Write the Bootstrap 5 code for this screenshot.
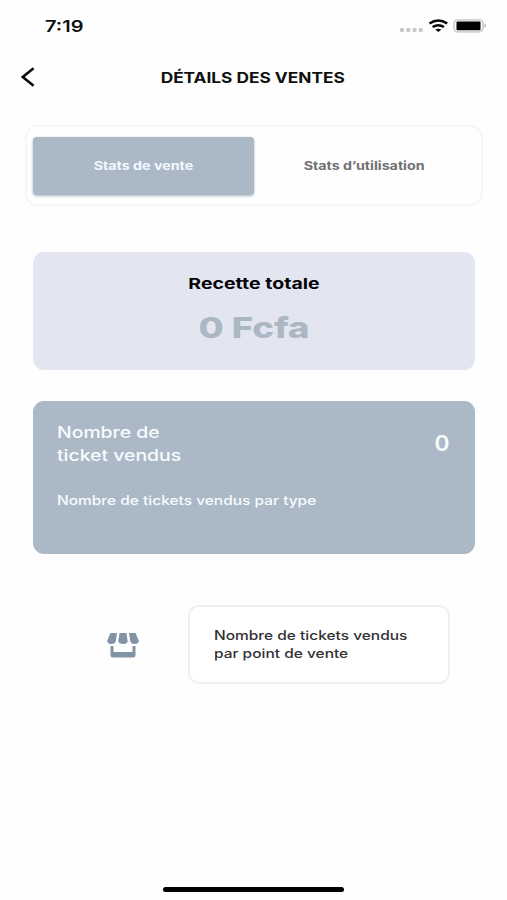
<!DOCTYPE html>
<html lang="fr">
<head>
<meta charset="utf-8">
<meta name="viewport" content="width=device-width, initial-scale=1">
<title>Détails des ventes</title>
<link href="https://cdn.jsdelivr.net/npm/bootstrap@5.3.0/dist/css/bootstrap.min.css" rel="stylesheet">
<style>
body{font-family:Inter,"Open Sans",sans-serif;background:#fefefe;color:#101010}
.screen{height:900px}
.status{height:52px;padding:0 20px 0 44.5px}
.topbar{height:50px;padding:0 21px}
.wide{display:inline-block;white-space:nowrap;transform:scaleX(var(--s));transform-origin:center}
.from-left{transform-origin:left}
.time{font-size:16px;font-weight:600;--s:1.25}
.title{font-size:14.4px;font-weight:700;--s:1.2}
.segments{margin:23px 24.500px 0 25px;height:81px;border:2px solid #f6f6f7;border-radius:12px;padding:10px 5.5px 9px 5.5px}
.segment{font-size:11.6px;font-weight:700;--s:1.23;border-radius:4px;border:0;width:50%;padding:1px 0 0}
.segment.active{background:#abb8c6!important;color:#f3faff!important;box-shadow:0 1px 3px #8997a6b0}
.segment.idle{color:#707072}
.revenue{margin:46px 32px 0 33px;height:118px;border-radius:11px;background:#e3e5f1;padding-top:20px}
.revenue-label{font-size:15px;line-height:24px;font-weight:700;color:#050507;--s:1.3}
.revenue-total{font-size:29px;line-height:40px;margin-top:12px;font-weight:800;color:#abb8c4;--s:1.26}
.tickets{margin:31px 32px 0 33px;height:153px;border-radius:11px;background:#abb8c6;color:#f7fcff;padding:20px 26px 0 24px}
.tickets-label{font-size:15.4px;line-height:23px;font-weight:500;--s:1.26}
.tickets-count{font-size:21px;line-height:30px;margin-top:8px;font-weight:600;--s:1.08}
.tickets-type{font-size:12.7px;line-height:20px;margin-top:24px;font-weight:500;--s:1.22}
.outlets{margin:51px 57px 0 105px}
.outlet-box{width:262px;height:79px;border:2px solid #eff0f3;border-radius:11px;padding:20px 0 0 24px;background:#fff}
.outlet-text{font-size:12.7px;line-height:18px;font-weight:500;color:#303032;--s:1.22}
.home{width:181px;height:5px;border-radius:3px;background:#000;margin:auto 0 8px 163px}
</style>
</head>
<body>
<main class="screen d-flex flex-column overflow-hidden">
  <div class="status d-flex align-items-center justify-content-between">
    <span class="wide from-left time">7:19</span>
    <svg width="90" height="20" viewBox="397 16 90 20" aria-hidden="true">
      <g fill="#c9c9c9"><rect x="400" y="28" width="4" height="4" rx="1"/><rect x="406.300" y="28" width="4" height="4" rx="1"/><rect x="412.500" y="28" width="4" height="4" rx="1"/><rect x="418.700" y="28" width="4" height="4" rx="1"/></g>
      <g fill="none" stroke="#0a0a0a" stroke-width="2.500"><path d="M429.400 23.500Q438.300 17.600 447.200 23.500"/><path d="M432.600 27Q438.300 23.300 444 27"/></g>
      <path d="M435.200 29.600Q438.300 27.700 441.400 29.600L438.300 32z" fill="#0a0a0a"/>
      <rect x="454" y="19.800" width="29" height="12" rx="4" fill="#fafafa" stroke="#d2d2d2" stroke-width="1.800"/>
      <rect x="456.500" y="21.500" width="24" height="8.700" rx="1" fill="#000"/>
      <path d="M484.500 23.500q2.800 2.200 0 4.400z" fill="#aaa"/>
    </svg>
  </div>
  <header class="topbar d-flex align-items-center">
    <svg width="14" height="20" viewBox="0 0 14 20" aria-label="Retour"><path d="M12.600 1.200 1.800 10 12.600 18.800" fill="none" stroke="#0a0a0a" stroke-width="2.500"/></svg>
    <div class="flex-fill text-center pe-3"><h1 class="wide title m-0">DÉTAILS DES VENTES</h1></div>
  </header>
  <div class="segments d-flex">
    <button class="btn segment active"><span class="wide">Stats de vente</span></button>
    <button class="btn segment idle"><span class="wide">Stats d’utilisation</span></button>
  </div>
  <section class="revenue text-center">
    <div><span class="wide revenue-label d-block">Recette totale</span></div>
    <div><span class="wide revenue-total d-block">0 Fcfa</span></div>
  </section>
  <section class="tickets">
    <div class="d-flex justify-content-between">
      <div class="wide from-left tickets-label">Nombre de<br>ticket vendus</div>
      <div class="wide tickets-count">0</div>
    </div>
    <div class="wide from-left tickets-type">Nombre de tickets vendus par type</div>
  </section>
  <section class="outlets d-flex align-items-center justify-content-between">
    <svg width="36" height="30" viewBox="105 629.500 36 30" fill="#8293a5" aria-hidden="true">
      <path d="M110.500 632.500h6.500l-1.300 8.500q-.8 2.500-4 2.500-4.500 0-4.500-3.300z"/>
      <path d="M119.500 632.500h7l1.200 8.500q-1 2.500-4.700 2.500t-4.700-2.500z"/>
      <path d="M129 632.500h6.500l3.300 7.700q0 3.300-4.500 3.300-3.200 0-4-2.500z"/>
      <path d="M110.500 645.500h3v6h19v-6h3v9q0 2.500-2.500 2.500h-20q-2.500 0-2.500-2.500z"/>
    </svg>
    <div class="outlet-box"><div class="wide from-left outlet-text">Nombre de tickets vendus<br>par point de vente</div></div>
  </section>
  <div class="home"></div>
</main>
<script src="https://cdn.jsdelivr.net/npm/bootstrap@5.3.0/dist/js/bootstrap.bundle.min.js"></script>
</body>
</html>
